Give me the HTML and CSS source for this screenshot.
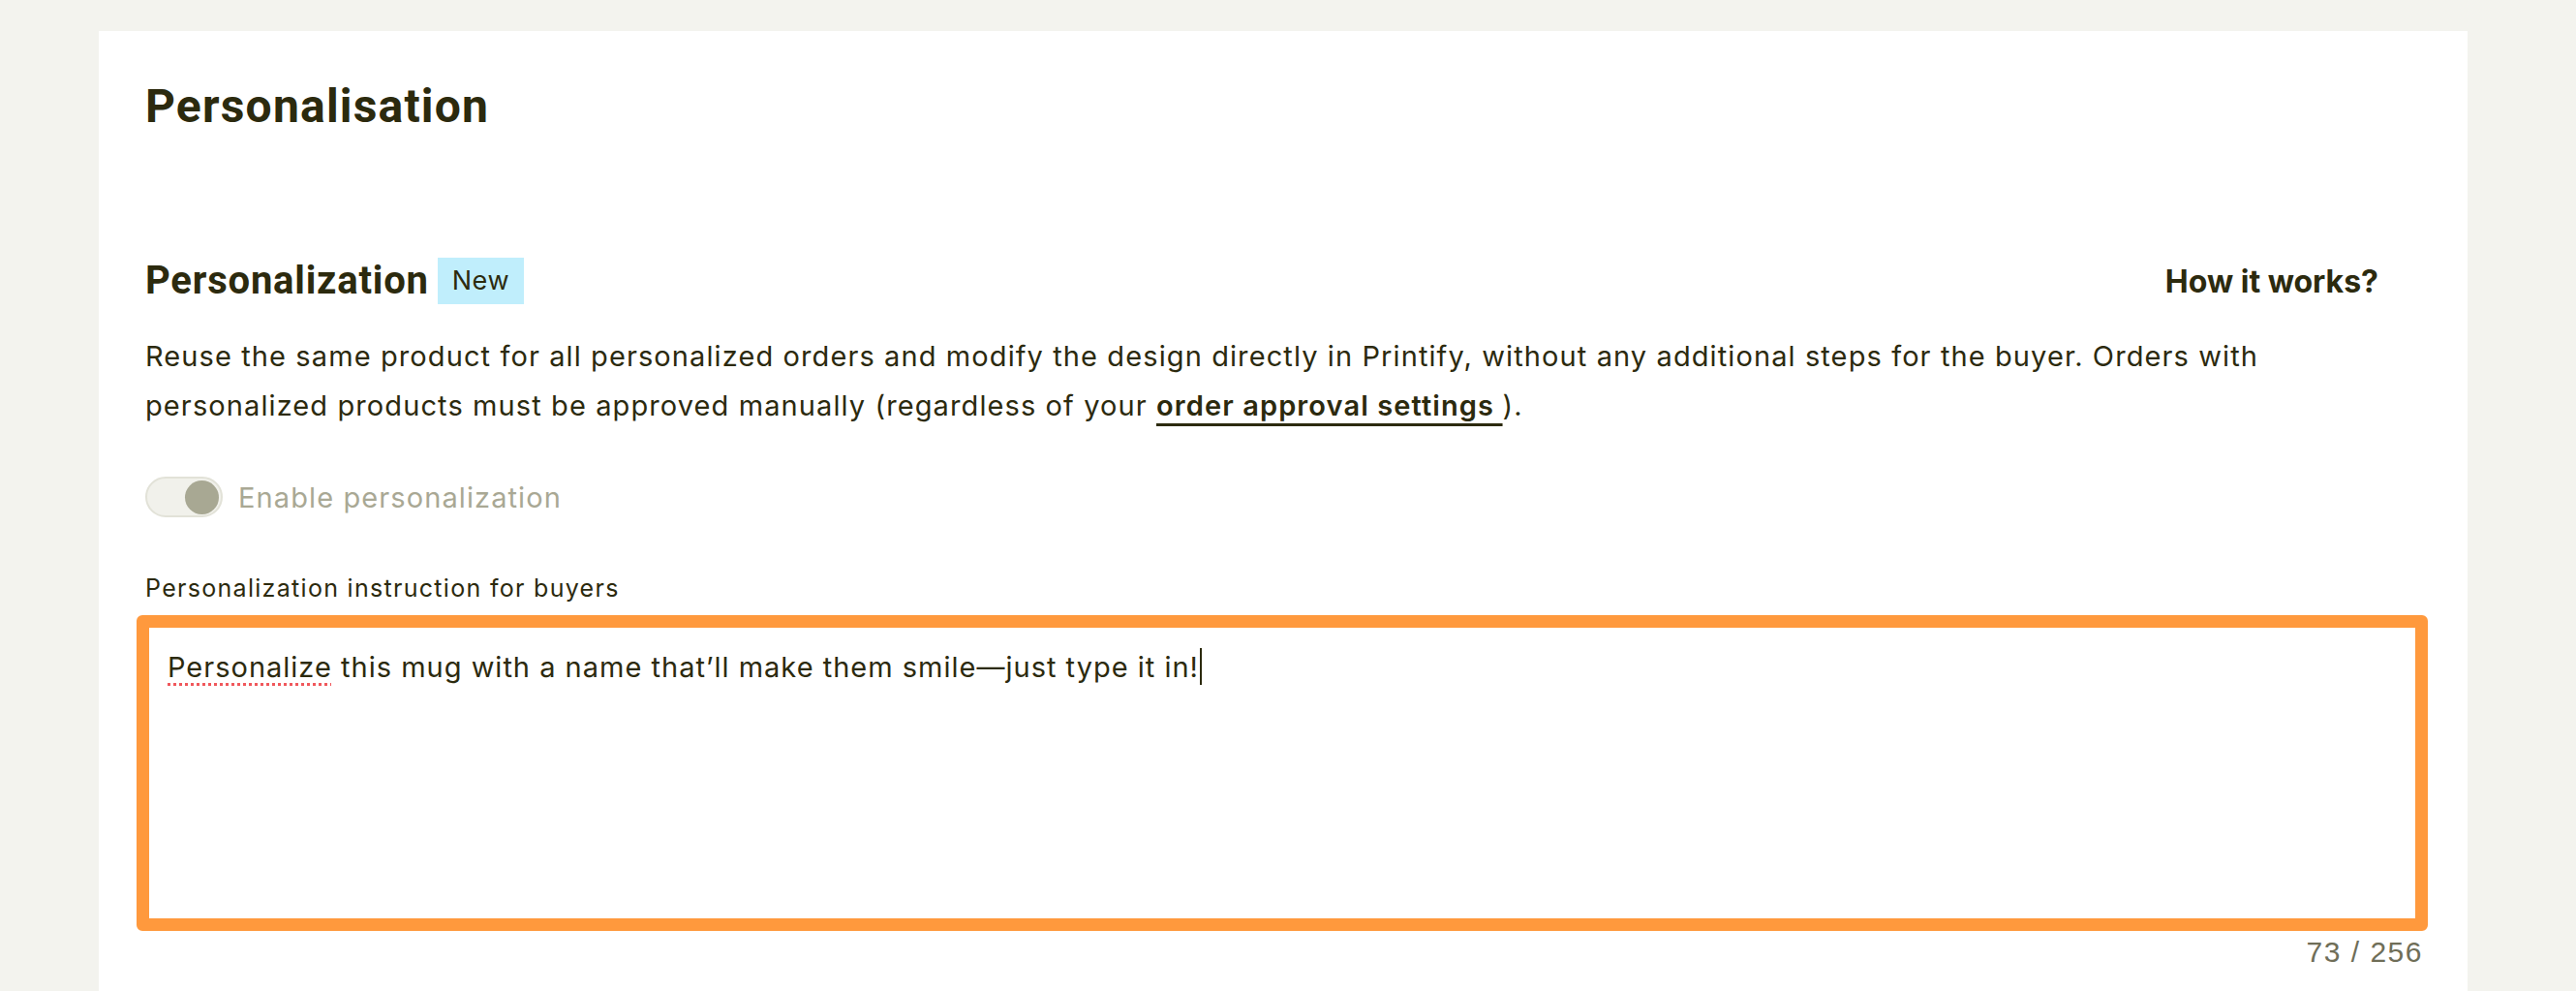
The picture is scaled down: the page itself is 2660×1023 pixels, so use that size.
FILE: index.html
```html
<!DOCTYPE html>
<html lang="en">
<head>
  <meta charset="UTF-8">
  <title>Personalisation</title>
  <link rel="stylesheet" href="styles.css">
</head>
<body>

<div class="card">
  <h1 class="page-title">Personalisation</h1>

  <div class="section-head">
    <div class="section-title">
      <h2>Personalization</h2>
      <span class="badge">New</span>
    </div>
    <a class="how-link">How it works?</a>
  </div>

  <p class="intro">Reuse the same product for all personalized orders and modify the design directly in Printify, without any additional steps for the buyer. Orders with personalized products must be approved manually (regardless of your <a class="text-link">order approval settings </a>).</p>

  <div class="toggle-row">
    <span class="toggle"><span class="knob"></span></span>
    <span class="toggle-label">Enable personalization</span>
  </div>

  <label class="field-label">Personalization instruction for buyers</label>
  <div class="field" role="textbox"><span class="misspelled">Personalize</span> this mug with a name that’ll make them smile—just type it in!<span class="caret"></span></div>
  <div class="counter">73 / 256</div>
</div>

</body>
</html>
```

FILE: styles.css
```css
body { margin: 0; background: #f3f3ee; font-family: Inter, Roboto, "Liberation Sans", sans-serif; color: #2c2a0e; }
.card { margin: 32px 0 0 102px; width: 2446px; min-height: 991px; box-sizing: border-box; background: #fff; padding: 50px 48px 40px; }
.page-title { font-family: Roboto, sans-serif; font-size: 48px; line-height: 56px; font-weight: 700; margin: 0; letter-spacing: 1.2px; }

.section-head { display: flex; justify-content: space-between; align-items: center; margin-top: 128px; height: 48px; }
.section-title { display: flex; align-items: center; gap: 9px; }
.section-title h2 { font-family: Roboto, sans-serif; font-size: 40px; line-height: 48px; margin: 0; font-weight: 700; letter-spacing: 0.8px; }
.badge { background: #c0eefc; font-size: 27px; line-height: 48px; padding: 0 15px; letter-spacing: 0.5px; }
.how-link { font-size: 32px; font-weight: 700; margin-right: 44px; cursor: pointer; }

.intro { font-size: 29px; line-height: 51px; margin: 28px 0 0; max-width: 2250px; letter-spacing: 1.1px; }
.text-link { font-weight: 600; text-decoration: underline; text-decoration-thickness: 3px; text-underline-offset: 8px; cursor: pointer; }

.toggle-row { display: flex; align-items: center; gap: 16px; margin-top: 48px; }
.toggle { width: 80px; height: 42px; box-sizing: border-box; border: 2px solid #e2e2d8; background: #f1f1eb; border-radius: 21px; display: flex; align-items: center; justify-content: flex-end; padding-right: 2px; }
.knob { width: 35px; height: 35px; border-radius: 50%; background: #a8a893; }
.toggle-label { font-size: 29px; color: #a9a894; letter-spacing: 1.1px; }

.field-label { display: block; font-size: 25px; line-height: 30px; margin-top: 58px; letter-spacing: 1.3px; }
.field { margin: 13px 0 0 -9px; width: 2366px; height: 326px; box-sizing: border-box; border: 13px solid #ff993d; border-radius: 6px; padding: 21px 19px; font-size: 29px; line-height: 40px; letter-spacing: 1px; }
.misspelled { text-decoration: underline dotted #f0585c; text-decoration-thickness: 3px; text-underline-offset: 6px; }
.caret { display: inline-block; width: 2px; height: 38px; background: #2c2a0e; vertical-align: -8px; margin-left: 1px; }
.counter { width: 2352px; text-align: right; margin-top: 6px; font-family: "Liberation Sans", Arial, sans-serif; font-size: 30px; line-height: 32px; color: #6f6e58; letter-spacing: 1.5px; }
```
